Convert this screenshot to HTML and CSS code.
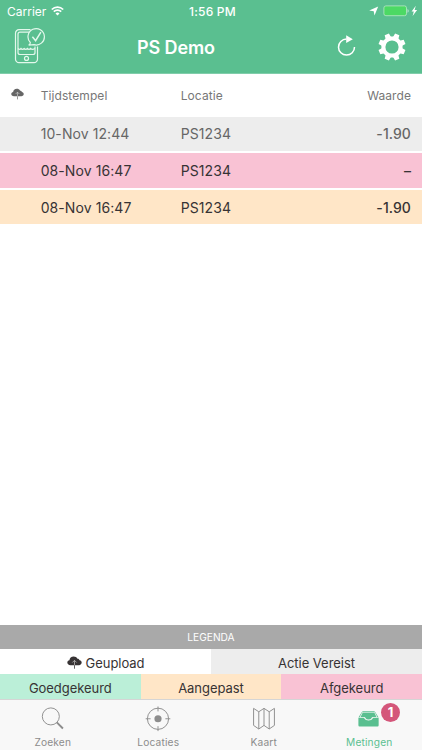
FILE: index.html
```
<!DOCTYPE html>
<html lang="nl">
	<head>
		<meta charset="UTF-8">
		<title>PS Demo</title>
		<link rel="stylesheet" href="styles.css">
	</head>
	<body>
		<!--wolk-icoon, gedeeld door tabel en legenda-->
		<svg class="defs" width="0" height="0">
			<symbol id="cloud" viewBox="0 0 14 12">
				<path d="M3.2 8.5C1.4 8.5.3 7.5.3 6.1.3 4.900 1.100 4 2.300 3.800 2.400 1.900 4 .4 6.200.4c1.600 0 2.900.7 3.600 2 .9-.1 1.700.5 1.900 1.400 1.200.2 2 1.100 2 2.300 0 1.400-1.100 2.400-2.500 2.400z" fill="currentColor"/>
				<path d="M7 8.500V4.300M5 6 7 4l2 2" fill="none" stroke="#fff" stroke-width=".8" opacity=".6"/>
				<path d="M7 8.500v3.300" stroke="currentColor" stroke-width=".9" opacity=".8"/>
			</symbol>
		</svg>

		<div class="app">
			<header>
				<div class="status">
					<div class="carrier">
						<span>Carrier</span>
						<svg width="13" height="10" viewBox="0 0 13 10" fill="none" stroke="#fff" stroke-width="1.700">
							<path d="M.8 3.500a8 8 0 0 1 11.400 0M2.800 5.700a5.200 5.200 0 0 1 7.400 0"/>
							<path d="M4.500 7.500a2.900 2.900 0 0 1 4 0l-2 2z" fill="#fff" stroke="none"/>
						</svg>
					</div>
					<div class="time">1:56 PM</div>
					<div class="power">
						<svg width="49" height="12" viewBox="0 0 49 12">
							<path d="M.2 5.600 9.200 1.400 5.500 10.400 4.700 6.300z" fill="#fff"/>
							<rect x="14.900" y=".9" width="22.600" height="9.800" rx="2" fill="#4cd964" stroke="#b9e8c8" stroke-width=".8"/>
							<path d="M38.600 4v3.800c1.300-.5 1.300-3.300 0-3.800z" fill="#d4f1e0"/>
							<path d="M46.800.8 42.600 6.400h2.200L43.600 11l4.500-6h-2.500z" fill="#fff"/>
						</svg>
					</div>
				</div>
				<div class="nav">
					<svg class="logo" width="34" height="38" viewBox="0 0 34 38" fill="none" stroke="#e3f8ec" stroke-width="1.200">
						<path d="M16.500 2.700H5A3.500 3.500 0 0 0 1.500 6.200v26A3.500 3.500 0 0 0 5 35.700h15a3.500 3.500 0 0 0 3.500-3.500V19.500"/>
						<path d="M15 5.200H6Q4 5.200 4 7.200v18.300Q4 27.500 6 27.500h13Q21 27.500 21 25.500v-6"/>
						<path d="M4 21.500q1.500 1.700 3 0 1.500 1.700 3.200 0 1.600 1.700 3.200 0 1.600 1.700 3.200 0 1.600 1.700 4.400 0"/>
						<circle cx="12.500" cy="31.400" r="2"/>
						<path d="M16.300 15.500A8.200 8.200 0 1 1 20 17.700L14.700 18.100q1.800-1.100 1.600-2.600z"/>
						<path d="m18.400 9.700 3.200 4 5.300-8.500" stroke-width="1.500"/>
					</svg>
					<h1>PS Demo</h1>
					<svg class="refresh" width="20" height="22" viewBox="0 0 20 22">
						<path d="M9.500 4.100A8 8 0 1 0 17.500 12" fill="none" stroke="#fff" stroke-width="1.500"/>
						<path d="M9.200.3v7.800l6.600-3.900z" fill="#fff"/>
					</svg>
					<svg class="gear" width="28" height="28" viewBox="-14 -14 28 28">
						<g fill="#fff">
							<g id="teeth">
								<path id="tooth" d="M-4-8.500-2.700-10.400-2.300-13.600h4.600l.4 3.200L4-8.500z" transform="rotate(22.500)"/>
								<use href="#tooth" transform="rotate(45)"/>
								<use href="#tooth" transform="rotate(90)"/>
								<use href="#tooth" transform="rotate(135)"/>
							</g>
							<use href="#teeth" transform="rotate(180)"/>
						</g>
						<circle r="8.600" fill="#5abf90" stroke="#fff" stroke-width="4"/>
					</svg>
				</div>
			</header>

			<main>
				<div class="row head">
					<svg class="cloud" width="13" height="12"><use href="#cloud"/></svg>
					<span>Tijdstempel</span>
					<span>Locatie</span>
					<span class="value">Waarde</span>
				</div>
				<div class="row action">
					<i></i>
					<span>10-Nov 12:44</span>
					<span>PS1234</span>
					<span class="value">-1.90</span>
				</div>
				<div class="row rejected">
					<i></i>
					<span>08-Nov 16:47</span>
					<span>PS1234</span>
					<span class="value">–</span>
				</div>
				<div class="row adjusted">
					<i></i>
					<span>08-Nov 16:47</span>
					<span>PS1234</span>
					<span class="value">-1.90</span>
				</div>
			</main>

			<!--legenda-->
			<section class="legend">
				<h2>LEGENDA</h2>
				<div class="legend-row">
					<div class="uploaded">
						<svg width="15" height="13"><use href="#cloud"/></svg>
						<span>Geupload</span>
					</div>
					<div class="action">Actie Vereist</div>
				</div>
				<div class="legend-row">
					<div class="approved">Goedgekeurd</div>
					<div class="adjusted">Aangepast</div>
					<div class="rejected">Afgekeurd</div>
				</div>
			</section>

			<nav class="tabs">
				<div class="tab">
					<svg width="28" height="28" viewBox="0 0 28 28" fill="none" stroke="currentColor">
						<circle cx="11.700" cy="11" r="9" stroke-width="1"/>
						<path d="m18 17.300 6.500 6.500" stroke-width="2"/>
					</svg>
					<span>Zoeken</span>
				</div>
				<div class="tab">
					<svg width="28" height="28" viewBox="0 0 28 28" fill="none" stroke="currentColor">
						<circle cx="14" cy="13.500" r="11.200"/>
						<circle cx="14" cy="13.500" r="3.800" fill="currentColor" stroke="none"/>
						<path d="M14 .5v5.200M14 21.300v5.200M1 13.500h5.200M21.800 13.500H27"/>
					</svg>
					<span>Locaties</span>
				</div>
				<div class="tab">
					<svg width="28" height="28" viewBox="0 0 28 28" fill="none" stroke="currentColor">
						<path d="m3 2.500 5.500 3.600L14 2.500l5.500 3.600L25 2.500v18l-5.500 3.800L14 20.500l-5.500 3.800L3 20.500zM8.500 6.100v18.200M14 2.500v18M19.500 6.100v18.200"/>
					</svg>
					<span>Kaart</span>
				</div>
				<div class="tab active">
					<svg width="28" height="28" viewBox="0 0 28 28" fill="currentColor">
						<path d="M3 12 6.300 6.600Q6.800 5.600 7.900 5.600h11.200q1.100 0 1.600 1L24 12h-1.100L20.200 6.600H6.800L4.100 12z"/>
						<path d="M7.300 7.200h12.400l2.200 4.400h-3.500Q17 11.600 16.500 13q-.4 1.300-3 1.300t-3-1.300q-.5-1.400-1.900-1.400H5.100z"/>
						<path d="M2.800 12.400h5.400q.8 0 1.100 1.100.8 1.900 4.200 1.900t4.200-1.900q.3-1.100 1.100-1.100h5.400v8q0 1.300-1.200 1.300H4q-1.200 0-1.200-1.300z"/>
					</svg>
					<span>Metingen</span>
					<b class="badge">1</b>
				</div>
			</nav>
		</div>
	</body>
</html>
```
FILE: styles.css
```
* {
	padding: 0;
	margin: 0;
	box-sizing: border-box;
}

body {
	font-family: Inter, "Liberation Sans", sans-serif;
	background-color: #fff;
	color: #373334;
}

.defs {
	display: block;
}

.app {
	width: 422px;
	height: 750px;
	display: flex;
	flex-direction: column;
}

/*bovenbalk*/
header {
	height: 74px;
	background-color: #5abf90;
	color: #fff;
	border-bottom: 1px solid #80cdaa;
}

.status {
	height: 22px;
	padding: 0 4px 0 7px;
	display: grid;
	grid-template-columns: 1fr auto 1fr;
	align-items: center;
	font-size: 12px;
}

.carrier {
	display: flex;
	align-items: center;
	gap: 5px;
}

.time {
	font-weight: 500;
	letter-spacing: 0.200px;
}

.power {
	display: flex;
	justify-content: flex-end;
}

.nav {
	height: 50px;
	padding: 0 16px 0 14px;
	display: flex;
	align-items: center;
}

.logo {
	margin-top: -2px;
}

h1 {
	font-size: 18px;
	line-height: 24px;
	font-weight: 600;
	letter-spacing: -0.100px;
	margin-left: 89px;
	margin-top: 1px;
}

.refresh {
	margin-left: auto;
	margin-right: 21px;
	margin-top: -3px;
}

.gear {
	margin-top: -1px;
}

/*tabel*/
main {
	flex: 1;
}

.row {
	height: 34.500px;
	margin-bottom: 2.200px;
	padding: 0 11px;
	display: grid;
	grid-template-columns: 29.700px 140px 1fr auto;
	align-items: center;
	font-size: 14px;
	letter-spacing: 0.080px;
}

.head {
	height: 42px;
	margin-bottom: 0.600px;
	font-size: 12px;
	color: #777;
}

.head .cloud {
	color: #666;
	margin-top: -3px;
}

.value {
	font-weight: 500;
}

.head .value {
	font-weight: 400;
}

.action {
	background-color: #ededed;
}

.row.action {
	color: #666;
}

.rejected {
	background-color: #f9c2d4;
}

.adjusted {
	background-color: #ffe6c7;
}

.approved {
	background-color: #bbefd8;
}

/*legenda*/
h2 {
	height: 24px;
	line-height: 25px;
	background-color: #a9a9a9;
	color: #fff;
	font-size: 10.200px;
	font-weight: 400;
	text-align: center;
}

.legend-row {
	height: 25px;
	display: flex;
	font-size: 13px;
	line-height: 28px;
	letter-spacing: -0.040px;
	text-align: center;
}

.legend-row div {
	flex: 1;
}

.legend-row .uploaded {
	display: flex;
	justify-content: center;
	gap: 4px;
}

.uploaded svg {
	margin-top: 7px;
}

/*tabbalk*/
.tabs {
	height: 51px;
	display: flex;
	background-color: #f8f8f8;
	border-top: 1px solid #d5d5d5;
}

.tab {
	flex: 1;
	position: relative;
	display: flex;
	flex-direction: column;
	align-items: center;
	padding-top: 6px;
	font-size: 10.200px;
	line-height: 16px;
	letter-spacing: 0.150px;
	color: #8c8c8c;
}

.tab span {
	margin-top: 1.500px;
}

.tab.active {
	color: #5abf90;
}

.badge {
	position: absolute;
	left: 64.500px;
	top: 3px;
	width: 19px;
	height: 19px;
	border-radius: 50%;
	background-color: #d4567a;
	color: #fff;
	font-size: 13px;
	line-height: 19px;
	letter-spacing: 0;
	text-align: center;
}
```
